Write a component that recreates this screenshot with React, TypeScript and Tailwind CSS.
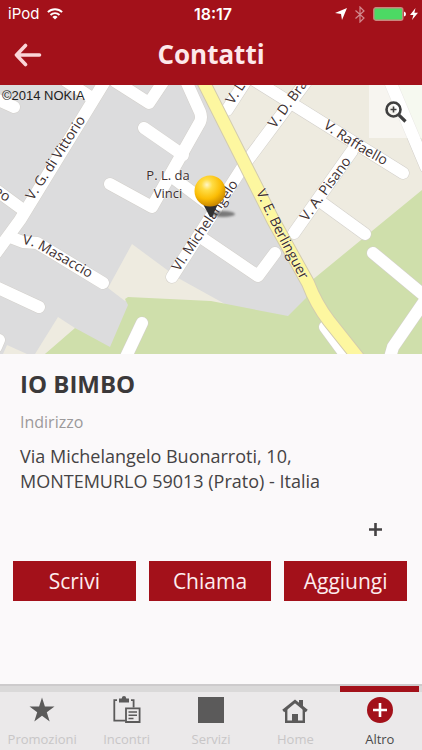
import React from "react";

const ROADS = [
  "M-4 14 L14 22",
  "M66 -4 L92 13",
  "M116 -3 L149 18 L165 -6",
  "M186 -4 L200 27 Q202 32 200 37 L152 122 L110 99",
  "M144 43 L183 70",
  "M172 92 L216 125",
  "M-4 105 L22 124",
  "M105 -4 L20 135 L-4 168",
  "M10 152 L23 157 L37 158 L103 198",
  "M-4 202 L39 222",
  "M-4 262 L-1 255",
  "M142 238 L124 276",
  "M172 192 L244 80 L291 17 L308 -6",
  "M199 151 L258 191 L275 168",
  "M247 -6 L227 25",
  "M254 -5 L403 88",
  "M352 66 L294 148",
  "M321 117 L365 149",
  "M389 -6 L426 82",
  "M373 168 L426 212",
  "M426 214 L393 262 L389 276",
  "M325 242 L350 276",
];

const HIGHWAY = "M201 -8 L273 135 L308 198 Q316 219 329 236 L364 280";

interface StreetLabel {
  id: string;
  d: string;
  text: string;
}

// every street name runs along its own baseline
const STREETS: StreetLabel[] = [
  { id: "vittorio", d: "M33 116 L101 11", text: "V. G. di Vittorio" },
  { id: "masaccio", d: "M22 159 Q32 160 42 166 L112 206", text: "V. Masaccio" },
  { id: "bra", d: "M275 44 L332 -34", text: "V. D. Bra" },
  { id: "leo", d: "M233 20 L271 -38", text: "V. L" },
  { id: "raffaello", d: "M323 42 Q352 65 402 89", text: "V. Raffaello" },
  { id: "pisano", d: "M307 137 L364 59", text: "V. A. Pisano" },
  { id: "michelangelo", d: "M179 187 L252 79", text: "VI. Michelangelo" },
  { id: "berlinguer", d: "M256 107 L276 149 L314 220", text: "V. E. Berlinguer" },
  { id: "galileo", d: "M-7 108 L30 133", text: "eo" },
];

function StreetMap() {
  return (
    <svg
      viewBox="0 0 422 269"
      preserveAspectRatio="xMidYMid slice"
      className="block w-full"
      role="img"
      aria-label="Mappa"
    >
      <rect width="422" height="269" fill="#dcdcdd" />
      <path d="M205 -2 H422 V110 L311 198 L273 135Z" fill="#eeebe0" />
      <path d="M391 -1 H422 V75Z" fill="#edf3e0" />
      <path d="M132 159 L178 193 L225 219 L128 214 L125 216 L108 203Z" fill="#eeebe0" />
      <path d="M58 232 L78 245 L45 269 H35Z" fill="#eeebe0" />
      <path d="M7 260 L27 269 H3Z" fill="#eeebe0" />
      <path
        d="M422 105 L311 196 L306 213 L288 231 L211 216 L128 212 L125 214 L128 220 L110 262 L75 243 L45 269 H422Z"
        fill="#cfdfab"
      />

      <g fill="none" strokeLinecap="round" strokeLinejoin="round">
        {ROADS.map((d) => (
          <path key={d} d={d} stroke="#d3d0cb" strokeWidth="13" />
        ))}
        {ROADS.map((d) => (
          <path key={d} d={d} stroke="#ffffff" strokeWidth="12" />
        ))}
        <path d={HIGHWAY} stroke="#d2cbae" strokeWidth="14" />
        <path d={HIGHWAY} stroke="#fdf7a0" strokeWidth="12" />
      </g>

      <g
        fill="#3d2f30"
        fontSize="14"
        fontFamily="'Open Sans', 'Noto Sans', sans-serif"
        stroke="#ffffff"
        strokeOpacity="0.5"
        strokeWidth="1"
        paintOrder="stroke"
      >
        {STREETS.map((s) => (
          <React.Fragment key={s.id}>
            <path id={s.id} d={s.d} fill="none" stroke="none" />
            <text>
              <textPath href={`#${s.id}`}>{s.text}</textPath>
            </text>
          </React.Fragment>
        ))}
        <text x="168" y="95" fontSize="13" textAnchor="middle">P. L. da</text>
        <text x="168" y="113" fontSize="13" textAnchor="middle">Vinci</text>
      </g>

      <text x="2" y="15" fontSize="13" fill="#222222" fontFamily="'Liberation Sans', Arial, sans-serif">
        ©2014 NOKIA
      </text>

      {/* pin */}
      <defs>
        <radialGradient id="ball" cx="0.4" cy="0.3" r="0.7">
          <stop offset="0" stopColor="#fff6c8" />
          <stop offset="0.25" stopColor="#ffdd45" />
          <stop offset="0.65" stopColor="#fbbd05" />
          <stop offset="1" stopColor="#c98800" />
        </radialGradient>
        <filter id="soft" x="-30%" y="-100%" width="160%" height="300%">
          <feGaussianBlur stdDeviation="1.2" />
        </filter>
      </defs>
      <ellipse cx="223" cy="129" rx="12" ry="3" fill="#444444" opacity="0.65" filter="url(#soft)" />
      <path d="M203 119 H218 L212 132 H210Z" fill="#303030" />
      <circle cx="210" cy="106" r="15.5" fill="url(#ball)" />
    </svg>
  );
}

function StatusBar() {
  return (
    <div className="grid h-7 grid-cols-3 items-center pl-2 pr-1 font-['Inter',sans-serif] text-white">
      <div className="flex items-center gap-2 text-[15px]">
        <span>iPod</span>
        <svg viewBox="0 0 16 12" className="h-3 w-4" fill="none" stroke="currentColor" strokeWidth="1.9">
          <path d="M0.9 4.2 A10 10 0 0 1 15.1 4.2" />
          <path d="M3.5 7 A6.4 6.4 0 0 1 12.5 7" />
          <path d="M8 11.6 L5.4 9 A3.7 3.7 0 0 1 10.6 9Z" fill="currentColor" stroke="none" />
        </svg>
      </div>
      <span className="text-center text-base font-semibold">18:17</span>
      <div className="flex items-center justify-end gap-1">
        <svg viewBox="0 0 12 12" className="mr-1 size-3" fill="currentColor">
          <path d="M12 0 L7 12 L6 6 L0 5Z" />
        </svg>
        <svg viewBox="0 0 10 17" className="mr-1 h-[17px] w-[10px] opacity-50" fill="none" stroke="currentColor" strokeWidth="1.2">
          <path d="M0.5 4.5 L9 12 L5 16 V1 L9 5 L0.5 12.5" />
        </svg>
        <svg viewBox="0 0 33 14" className="h-[14px] w-[33px]">
          <rect x="0.8" y="0.8" width="29" height="12.4" rx="2" fill="#4cd964" stroke="#c9877f" strokeWidth="1.4" />
          <path d="M31 4.5 Q33 5 33 7 Q33 9 31 9.5Z" fill="#ffffff" />
        </svg>
        <svg viewBox="0 0 8 12" className="h-3 w-2" fill="currentColor">
          <path d="M5.5 0 L0 7 H3.4 L2 12 L8 4.8 H4.4Z" />
        </svg>
      </div>
    </div>
  );
}

function StarIcon() {
  return (
    <svg viewBox="0 0 26 26" className="size-[26px]" fill="currentColor">
      <path d="M13 0.5 L15.9 9.6 H25.5 L17.8 15.2 L20.7 24.4 L13 18.7 L5.3 24.4 L8.2 15.2 L0.5 9.6 H10.1Z" />
    </svg>
  );
}

function ClipboardIcon() {
  return (
    <svg viewBox="0 0 28 27" className="h-[27px] w-7" fill="none" stroke="currentColor" strokeWidth="1.8">
      <path d="M4 4.2 H1.3 V24.6 H12.5 M18 4.2 H20.6 V11.5" />
      <path d="M6 6.5 V2.4 H8.7 Q9 0 11 0 Q13 0 13.3 2.4 H16 V6.5Z" fill="currentColor" stroke="none" />
      <path d="M13 12.3 H26.6 V26 H13Z" />
      <path d="M15.5 16 H24 M15.5 19.2 H24 M15.5 22.4 H20.5" strokeWidth="1.5" />
    </svg>
  );
}

function SquareIcon() {
  return <span className="block size-[26px] bg-[#5b5a5a]" />;
}

function HomeIcon() {
  return (
    <svg viewBox="0 0 26 26" className="size-[26px]" fill="none" stroke="currentColor">
      <path d="M1.2 14 L13 4.4 L24.8 14" strokeWidth="3" />
      <path d="M4.2 12 V24.8 H21.8 V12" strokeWidth="2.4" />
      <path d="M17 3 H21 V10 L17 7Z M10 17 H16 V25 H10Z" fill="currentColor" stroke="none" />
    </svg>
  );
}

function PlusIcon() {
  return (
    <svg viewBox="0 0 26 26" className="size-[26px]">
      <circle cx="13" cy="13" r="13" fill="#a3111a" />
      <path d="M13 6 V20 M6 13 H20" stroke="#ffffff" strokeWidth="2.6" />
    </svg>
  );
}

const TABS = [
  { label: "Promozioni", icon: <StarIcon />, active: false },
  { label: "Incontri", icon: <ClipboardIcon />, active: false },
  { label: "Servizi", icon: <SquareIcon />, active: false },
  { label: "Home", icon: <HomeIcon />, active: false },
  { label: "Altro", icon: <PlusIcon />, active: true },
];

function TabBar() {
  return (
    <nav className="mt-auto grid h-[66px] grid-cols-5 bg-[#ebe9ea]">
      {TABS.map((tab) => (
        <a
          key={tab.label}
          href="#"
          aria-current={tab.active ? "page" : undefined}
          className="flex flex-col items-center text-[#5b5a5a]"
        >
          {/* strip on top, red for the open tab */}
          <span className="block h-2 self-stretch border-t-2 border-[#cdcbcc] bg-[#dad9d9]">
            {tab.active && <span className="ml-[2px] mr-[3px] block h-[6px] bg-[#a3111a]" />}
          </span>
          <span className="mt-1 flex h-[27px] items-center">{tab.icon}</span>
          <span className={tab.active ? "mt-[6px] text-[13px] leading-5 text-[#4a4a4a]" : "mt-[6px] text-[13px] leading-5 text-[#c8c6c7]"}>
            {tab.label}
          </span>
        </a>
      ))}
    </nav>
  );
}

export default function App() {
  return (
    <div className="flex min-h-screen flex-col bg-[#fbf9fa] font-['Open_Sans','Noto_Sans',sans-serif] text-[#454344]">
      <header className="bg-[#a3111a] pb-1">
        <StatusBar />
        <div className="grid h-[53px] grid-cols-[56px_1fr_56px] items-center">
          <button type="button" aria-label="Indietro" className="pl-[14px] text-[#fbd5d8]">
            <svg viewBox="0 0 28 24" className="h-6 w-7" fill="none" stroke="currentColor" strokeWidth="3.6" strokeLinecap="round" strokeLinejoin="round">
              <path d="M11.5 2.5 L2.5 12 L11.5 21.5 M2.5 12 H25.5" />
            </svg>
          </button>
          <h1 className="pb-px text-center text-[26px] font-bold leading-8 text-[#fde8ea]">Contatti</h1>
        </div>
      </header>

      <div className="relative">
        <StreetMap />
        <button
          type="button"
          aria-label="Ingrandisci mappa"
          className="absolute right-0 top-0 flex size-[53px] items-center justify-center bg-white/50 text-[#3f3f3f]"
        >
          <svg viewBox="0 0 22 22" className="size-[22px]" fill="none" stroke="currentColor">
            <circle cx="8.5" cy="8.5" r="7" strokeWidth="2.6" />
            <path d="M8.5 5.5 V11.5 M5.5 8.5 H11.5" strokeWidth="1.6" />
            <path d="M13.8 13.8 L20.5 20.5" strokeWidth="3.2" />
          </svg>
        </button>
      </div>

      <main className="pb-6">
        <section className="px-5 pt-[14px]">
          <h2 className="text-2xl font-bold leading-8 text-[#3b393a]">IO BIMBO</h2>
          <p className="mt-3 text-base leading-5 text-[#9c9a9b]">Indirizzo</p>
          <p className="mt-3 text-lg leading-[25px]">
            Via Michelangelo Buonarroti, 10,
            <br />
            MONTEMURLO 59013 (Prato) - Italia
          </p>
        </section>

        <div className="flex justify-end pr-9 pt-6">
          <button type="button" aria-label="Mostra altro" className="flex size-[22px] items-center justify-center">
            <svg viewBox="0 0 13 13" className="size-[13px]" stroke="currentColor" strokeWidth="2.6">
              <path d="M6.5 0 V13 M0 6.5 H13" />
            </svg>
          </button>
        </div>

        <div className="grid grid-cols-3 gap-[13px] pl-[13px] pr-[15px] pt-[21px]">
          {["Scrivi", "Chiama", "Aggiungi"].map((label) => (
            <button key={label} type="button" className="h-10 bg-[#a3111a] text-[21px] leading-none text-[#fdecee]">
              {label}
            </button>
          ))}
        </div>
      </main>

      <TabBar />
    </div>
  );
}
